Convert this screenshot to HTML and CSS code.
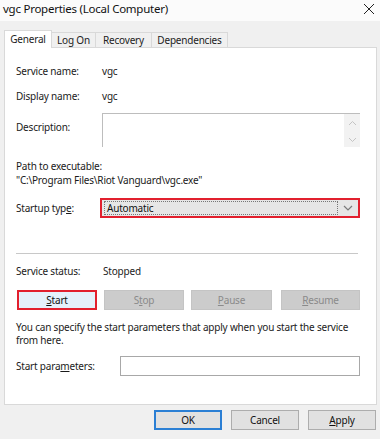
FILE: index.html
```html
<!DOCTYPE html>
<html>
<head>
<meta charset="utf-8">
<link rel="stylesheet" href="styles.css">
</head>
<body>
<div class="window">
  <div class="titlebar">
    <span class="title">vgc Properties (Local Computer)</span>
    <svg class="close" width="12" height="12" viewBox="0 0 12 12"><path d="M1 1 L11 11 M11 1 L1 11" stroke="#222" stroke-width="1" fill="none"/></svg>
  </div>
  <div class="tabs">
    <div class="tab active">General</div>
    <div class="tab">Log On</div>
    <div class="tab">Recovery</div>
    <div class="tab">Dependencies</div>
  </div>
  <div class="panel">
    <div class="row first"><span class="lbl">Service name:</span><span class="val">vgc</span></div>
    <div class="row second"><span class="lbl">Display name:</span><span class="val">vgc</span></div>
    <div class="row desc">
      <span class="lbl desc-lbl">Description:</span>
      <div class="descbox">
        <div class="scroll">
          <svg width="9" height="6" viewBox="0 0 9 6"><path d="M1 5 L4.5 1.5 L8 5" stroke="#c4c4c4" stroke-width="1" fill="none"/></svg>
          <svg width="9" height="6" viewBox="0 0 9 6"><path d="M1 1 L4.5 4.5 L8 1" stroke="#c4c4c4" stroke-width="1" fill="none"/></svg>
        </div>
      </div>
    </div>
    <div class="path-lbl">Path to executable:</div>
    <div class="path-val">"C:\Program Files\Riot Vanguard\vgc.exe"</div>
    <div class="row startup">
      <span class="lbl">Startup typ<u>e</u>:</span>
      <div class="combo">
        <div class="combo-text">Automatic</div>
        <svg class="chev" width="10" height="6" viewBox="0 0 10 6"><path d="M1 1 L5 5 L9 1" stroke="#7a7a7a" stroke-width="1.2" fill="none"/></svg>
      </div>
    </div>
    <div class="sep"></div>
    <div class="row status"><span class="lbl">Service status:</span><span class="val">Stopped</span></div>
    <div class="btnrow">
      <div class="btn start"><span><u>S</u>tart</span></div>
      <div class="btn disabled">S<u>t</u>op</div>
      <div class="btn disabled"><u>P</u>ause</div>
      <div class="btn disabled"><u>R</u>esume</div>
    </div>
    <div class="note">You can specify the start parameters that apply when you start the service from here.</div>
    <div class="row params"><span class="lbl plbl">Start para<u>m</u>eters:</span><div class="input"></div></div>
  </div>
  <div class="footer">
    <div class="fbtn ok">OK</div>
    <div class="fbtn">Cancel</div>
    <div class="fbtn"><u>A</u>pply</div>
  </div>
</div>
</body>
</html>
```
FILE: styles.css
```css
html, body {
  margin: 0;
  padding: 0;
}
body {
  width: 380px;
  height: 439px;
  overflow: hidden;
  background: #f0f0f0;
  font-family: "Noto Sans", "Open Sans", sans-serif;
  font-size: 10px;
  letter-spacing: -0.2px;
  color: #1a1a1a;
}
u { text-decoration: underline; text-underline-offset: 1px; }
.window { width: 380px; height: 439px; }
.titlebar {
  height: 21px;
  background: #fbfbfb;
  display: flex;
  align-items: center;
  justify-content: space-between;
  padding: 0 4px 0 3px;
}
.title {
  font-size: 11.5px;
  letter-spacing: -0.25px;
  color: #111;
  margin-top: -4px;
}
.close { margin-top: -4px; margin-right: 1px; }
.tabs {
  display: flex;
  align-items: flex-end;
  height: 26px;
  padding-left: 4px;
  box-sizing: border-box;
}
.tab {
  box-sizing: border-box;
  height: 15px;
  line-height: 14px;
  border: 1px solid #d9d9d9;
  border-bottom: none;
  margin-left: -1px;
  background: #f0f0f0;
  color: #222;
  white-space: nowrap;
  text-align: center;
}
.tab:nth-child(2) { width: 45px; }
.tab:nth-child(3) { width: 57px; }
.tab:nth-child(4) { width: 77px; }
.tab.active {
  margin-left: 0;
  height: 18px;
  line-height: 16px;
  width: 48px;
  background: #fff;
  position: relative;
  z-index: 1;
  margin-bottom: -1px;
}
.panel {
  margin: 0 3px 0 4px;
  height: 358px;
  background: #fff;
  border: 1px solid #d9d9d9;
  box-sizing: border-box;
  padding: 16px 16px 0 11px;
}
.row {
  display: flex;
  align-items: center;
}
.lbl { width: 86px; flex: none; }
.val { color: #222; }
.row.first, .row.second { height: 14px; line-height: 14px; }
.row.second { margin-top: 11px; }
.row.desc { margin-top: 10px; align-items: flex-start; }
.desc-lbl { margin-top: 7px; }
.descbox {
  flex: 1;
  height: 34px;
  border-top: 1px solid #bdbdbd;
  border-left: 1px solid #bdbdbd;
  box-sizing: border-box;
  display: flex;
  justify-content: flex-end;
}
.scroll {
  width: 16px;
  background: #f2f2f2;
  display: flex;
  flex-direction: column;
  align-items: center;
  justify-content: space-between;
  padding: 6px 0 4px;
  box-sizing: border-box;
}
.path-lbl { margin-top: 12px; line-height: 14px; }
.path-val { line-height: 15px; }
.row.startup { margin-top: 10px; }
.combo {
  margin-left: -2px;
  flex: 1;
  height: 20px;
  border: 2px solid #e2202e;
  box-sizing: border-box;
  background: #e6e6e6;
  display: flex;
  align-items: center;
  padding: 1px 5px 1px 2px;
}
.combo-text {
  flex: 1;
  height: 14px;
  line-height: 13px;
  border: 1px dotted #777;
  box-sizing: border-box;
  padding-left: 2px;
  color: #111;
}
.chev { margin-left: 5px; }
.sep {
  margin-top: 35px;
  height: 1px;
  background: #c8c8c8;
  margin-right: 2px;
}
.row.status { margin-top: 10px; height: 14px; }
.row.status .val { margin-left: 1px; }
.btnrow {
  display: flex;
  gap: 7px;
  margin-top: 12px;
}
.btn {
  height: 20px;
  box-sizing: border-box;
  display: flex;
  align-items: center;
  justify-content: center;
  width: 80px;
}
.btn.start {
  margin-left: 1px;
  border: 2px solid #e2202e;
  background: #e5f1fb;
  color: #111;
}
.btn.disabled {
  background: #cccccc;
  border: 1px solid #c4c4c4;
  color: #8a8a8a;
}
.btn.disabled:nth-child(3) { width: 81px; }
.btn.disabled:nth-child(4) { margin-left: 2px; width: 79px; }
.note {
  margin-top: 11px;
  line-height: 13px;
  color: #222;
}
.row.params { margin-top: 9px; }
.plbl { width: 104px; }
.input {
  flex: 1;
  height: 20px;
  border: 1px solid #a8a8a8;
  box-sizing: border-box;
}
.footer {
  display: flex;
  justify-content: flex-end;
  gap: 9px;
  padding: 5px 4px 0 0;
}
.fbtn {
  width: 68px;
  height: 20px;
  box-sizing: border-box;
  background: #e1e1e1;
  border: 1px solid #adadad;
  display: flex;
  align-items: center;
  justify-content: center;
  color: #111;
}
.fbtn.ok { border: 2px solid #2b7fd4; }
```
